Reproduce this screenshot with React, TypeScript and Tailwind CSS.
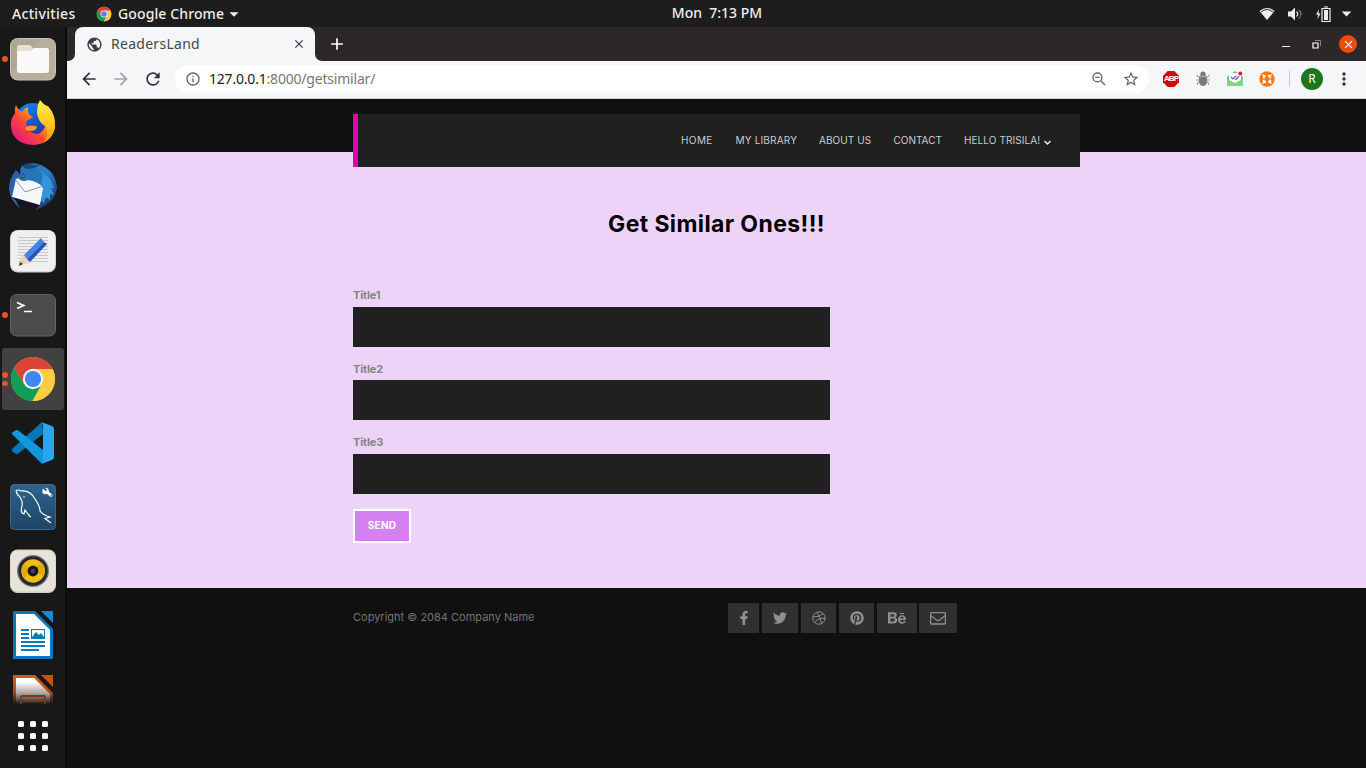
import React from "react";
import {
  MdAdd, MdArrowBack, MdArrowForward, MdClose, MdInfoOutline,
  MdMoreVert, MdPublic, MdRefresh, MdStarBorder, MdArrowDropDown,
} from "react-icons/md";
import { FaBehance, FaFacebookF, FaPinterest, FaTwitter } from "react-icons/fa";

const ChromeLogo = ({ className }: { className: string }) => (
  <svg viewBox="0 0 48 48" className={className}>
    <circle cx="24" cy="24" r="22" fill="#ffcd40" />
    <path d="M24 24 L4.9 13 A22 22 0 0 1 43.6 14 L24 14Z" fill="#db4437" />
    <path d="M4.9 13 A22 22 0 0 0 23.5 46 L32.7 29.5 L24 24 L15.3 29Z" fill="#0f9d58" />
    <path d="M4.9 13 L15.3 29 L24 14 L24 6Z" fill="#db4437" />
    <path d="M4.9 13 L15.3 31 L12 34 L3 20Z" fill="#0f9d58" />
    <path d="M24 14H43.6A22 22 0 0 1 23.5 46L32.7 29Z" fill="#ffcd40" />
    <circle cx="24" cy="24" r="10.2" fill="#f4f4f4" />
    <circle cx="24" cy="24" r="8.1" fill="#4285f4" />
  </svg>
);

const Files = () => (
  <svg viewBox="0 0 48 48" className="size-12">
    <rect x="1" y="3" width="46" height="42.5" rx="8" fill="#c9c3b3" />
    <rect x="2" y="4" width="44" height="40.5" rx="7" fill="#aea793" />
    <path d="M2 37 33 4H39Q46 4 46 11V37Q46 44 39 44H9Q2 44 2 37Z" fill="#b6af9c" />
    <path d="M8 13Q8 10 10 10H20Q22 10 23 12L24 14H38V24H8Z" fill="#e5dfd4" />
    <path d="M8 16H20Q22 16 24 14L25 13H37Q40 13 40 15V35Q40 38 37 38H11Q8 38 8 35Z" fill="#faf9f7" />
  </svg>
);

const Firefox = () => (
  <svg viewBox="0 0 48 48" className="size-12">
    <defs>
      <linearGradient id="ffa" x1="0.9" y1="0.1" x2="0.1" y2="0.9">
        <stop offset="0" stopColor="#ffdc2d" /><stop offset=".35" stopColor="#ff9a18" />
        <stop offset=".6" stopColor="#ff4638" /><stop offset="1" stopColor="#e01784" />
      </linearGradient>
      <linearGradient id="ffb" x1="0" y1="0" x2="0.6" y2="1">
        <stop offset="0" stopColor="#0b8df5" /><stop offset="1" stopColor="#2731a5" />
      </linearGradient>
      <linearGradient id="ffc" x1="0" y1="0" x2="0" y2="1">
        <stop offset="0" stopColor="#fff14a" /><stop offset=".5" stopColor="#ffcc24" /><stop offset="1" stopColor="#ff8b16" />
      </linearGradient>
    </defs>
    <circle cx="24" cy="22" r="18" fill="url(#ffb)" />
    <path d="M7 6Q5 10 6 14Q1 20 2 29Q5 45 24 46Q43 45 46 28Q46 14 33 5Q37 14 37 23Q36 33 28 35Q20 34 19 29Q26 31 28 27Q22 26 18 27Q15 22 21 20L24 18Q18 16 19 8Q15 9 13 13Q9 11 7 6Z" fill="url(#ffa)" />
    <path d="M31 1Q36 7 39 7Q47 16 46 28Q44 39 34 44Q41 36 37 28Q29 23 28 14Q28 6 31 1Z" fill="url(#ffc)" />
    <path d="M17 28Q23 26 28 28Q27 32 22 32Q18 32 16 30Z" fill="#ff9726" />
  </svg>
);

const Thunderbird = () => (
  <svg viewBox="0 0 48 48" className="size-12">
    <defs>
      <linearGradient id="tb" x1="0" y1="0" x2="0.8" y2="1">
        <stop offset="0" stopColor="#2678be" /><stop offset=".5" stopColor="#2d80ca" /><stop offset="1" stopColor="#1c2c68" />
      </linearGradient>
    </defs>
    <path d="M13 3Q22 -2 32 2Q46 8 48 24Q47 40 26 47Q32 42 35 36L9 29Q5 22 12 13Q10 6 13 3Z" fill="url(#tb)" />
    <path d="M7 7Q0 16 0 26Q1 38 12 46Q5 38 7 31Q5 22 11 13L9 9Z" fill="#2863aa" />
    <path d="M7 16 13 14 24 17 35 22 31 42 3 34Z" fill="#f6f7f9" />
    <path d="M6 16 16 29 34 23" fill="none" stroke="#8b98a8" strokeWidth="1" />
    <path d="M10 14Q11 6 18 2Q30 2 33 14Q35 21 33 23Q27 18 19 17Q15 19 11 17Q9 16 10 14Z" fill="#2773b9" />
    <path d="M34 10Q42 14 45 25L42 25 45 32 41 31 41 37 37 34 35 40 32 38 34 26 32 21Z" fill="#3394d8" />
    <path d="M13 3Q17 -1 21 1Q27 3 31 2Q25 6 17 6Z" fill="#174979" />
    <path d="M12 12 15 10 16 15 12 16Z" fill="#3d4b50" />
    <circle cx="14" cy="13" r=".8" fill="#c8a17a" />
    <path d="M3 34 30 43 26 45Q15 44 5 36Z" fill="#191225" />
  </svg>
);

const Editor = () => (
  <svg viewBox="0 0 48 48" className="size-12">
    <rect x="1" y="3" width="46" height="42.5" rx="8" fill="#d6d6d6" />
    <rect x="2" y="3.5" width="44" height="40.5" rx="7" fill="#efefef" />
    <path d="M9 10.5H39M9 13.5H39M9 16.5H39M9 19.5H39M9 22.5H39M9 25.5H39M9 28.5H39M9 31.5H39M9 34.5H39" stroke="#c8c8c8" strokeWidth="1" />
    <path d="M10 39 12 31 17.5 36Z" fill="#eacda9" />
    <path d="M10 39 11 35 14 37Z" fill="#333" />
    <path d="m12 31 3-3 7 7-4 2Z" fill="#f5d1b3" />
    <path d="M15 28 32 11 35 15 18 32Z" fill="#4682e6" />
    <path d="m18 32 17-17 3 2L21 35Z" fill="#2555bd" />
  </svg>
);

const Terminal = () => (
  <svg viewBox="0 0 48 48" className="size-12">
    <rect x="1.5" y="3.5" width="45" height="41.5" rx="6" fill="#4b4b4b" stroke="#656565" />
    <path d="m8 11.5 6.5 3-6.5 3" fill="none" stroke="#fff" strokeWidth="1.9" />
    <path d="M15 20.5H23" stroke="#fff" strokeWidth="1.5" />
  </svg>
);

const VSCode = () => (
  <svg viewBox="0 0 48 48" className="size-12">
    <path d="M33 3 3 30Q2 32 4 33L7 35Q9 35 10 34L34 15Z" fill="#0877b9" />
    <path d="M3 15Q2 14 4 13L7 11Q9 11 10 12L34 31V45L31 43Z" fill="#0f98dc" />
    <path d="M32 3 43 7Q45 8 45 10V38Q45 40 43 41L32 45Q34 44 34 41V7Q34 4 32 3Z" fill="#28a7f0" />
  </svg>
);

const Workbench = () => (
  <svg viewBox="0 0 48 48" className="size-12">
    <defs><linearGradient id="wb" x1="0" y1="0" x2="0" y2="1"><stop stopColor="#2f638f" /><stop offset="1" stopColor="#1d4567" /></linearGradient></defs>
    <rect x="1.5" y="1.5" width="45" height="45" rx="4" fill="url(#wb)" stroke="#47749a" strokeWidth=".8" />
    <path d="M7 8Q8 6 12 8Q21 7 26 16Q31 23 31 28Q34 32 41 34L36 35.5L42 40M7 8Q8 12 11 14Q14 19 13 23Q11 30 15 31L16 27L19 31Q20 33 22 34" fill="none" stroke="#fff" strokeWidth="1.2" />
    <circle cx="15" cy="14" r=".8" fill="#fff" />
    <path d="M37 8 42 12.5" stroke="#fff" strokeWidth="3" strokeLinecap="round" />
    <circle cx="36.5" cy="8" r="3.2" fill="#fff" /><path d="M33 3.5 37.5 7.5" stroke="#2d608b" strokeWidth="2" />
    <circle cx="42.3" cy="12.8" r=".8" fill="#2e5b80" />
  </svg>
);

const Speaker = () => (
  <svg viewBox="0 0 48 48" className="size-12">
    <rect x="1" y="2.5" width="46" height="43.5" rx="7.5" fill="#d1ccc1" />
    <rect x="1.5" y="3.5" width="45" height="41" rx="7" fill="#e7e3d9" />
    <circle cx="24" cy="24" r="16" fill="#76787a" /><circle cx="24" cy="24" r="14.7" fill="#252733" />
    <circle cx="24" cy="24" r="11.8" fill="#f2bd14" />
    <path d="m24 24-9-7q-4 7 0 14ZM24 24l8-9q6 5 3 14Z" fill="#e4a90b" />
    <circle cx="24" cy="24" r="5.4" fill="#17191d" /><circle cx="24" cy="24" r="2.3" fill="#42464a" />
  </svg>
);

const Writer = () => (
  <svg viewBox="0 0 48 48" className="size-12">
    <path d="M5 0H26L44 18V47Q44 48 43 48H5Q4 48 4 47V1Q4 0 5 0Z" fill="#087ac0" />
    <path d="M7 3H25L41 19V45H7Z" fill="#fff" />
    <path d="M32 0H43Q44 0 44 1V12Z" fill="#168bd2" />
    <path d="M12 19H20M12 23H20M12 27H20M12 31H36M12 35H36M12 39H30" stroke="#087bbb" strokeWidth="1.8" />
    <rect x="22.5" y="18.5" width="13" height="9" fill="#fff" stroke="#087bbb" />
    <path d="m23 26 4-5 3 3 2-2 3 4v2H23Z" fill="#087bbb" />
  </svg>
);

const Impress = () => (
  <svg viewBox="0 0 48 29" className="h-[29px] w-12">
    <defs><linearGradient id="pageFade" x1="0" y1="0" x2="0" y2="1"><stop offset=".15" stopColor="#fff" /><stop offset=".6" stopColor="#aaa19d" /><stop offset="1" stopColor="#171717" /></linearGradient>
      <linearGradient id="orangeFade" x1="0" y1="0" x2="0" y2="1"><stop offset=".2" stopColor="#d05b17" /><stop offset=".6" stopColor="#a74914" /><stop offset="1" stopColor="#171717" /></linearGradient></defs>
    <path d="M4 0H26L44 18V29H4Z" fill="url(#orangeFade)" /><path d="M7 3H25L41 19V29H7Z" fill="url(#pageFade)" />
    <path d="M32 0H44V12Z" fill="#c8530f" />
    <path d="M12 29V22Q12 21 13 21H35Q36 21 36 22V29M15 26H33" fill="none" stroke="#7f3814" strokeWidth="1.8" />
  </svg>
);

const dock: { icon: React.ReactNode; dots?: number; active?: boolean }[] = [
  { icon: <Files />, dots: 1 }, { icon: <Firefox /> }, { icon: <Thunderbird /> }, { icon: <Editor /> },
  { icon: <Terminal />, dots: 1 }, { icon: <ChromeLogo className="size-12" />, dots: 2, active: true },
  { icon: <VSCode /> }, { icon: <Workbench /> }, { icon: <Speaker /> }, { icon: <Writer /> },
];

function Dock() {
  return (
    <aside className="flex w-[67px] shrink-0 flex-col border-r-2 border-[#0c0c0c] bg-[#181818]">
      {dock.map((d, i) => (
        <div key={i} className="flex h-16 w-[65px] shrink-0 items-center">
          <div className={d.active ? "relative ml-[2px] flex h-[62px] w-[62px] items-center rounded-[3px] bg-[#414141] pl-[7px]" : "relative ml-[2px] flex h-[62px] w-[62px] items-center pl-[7px]"}>
            <div className="absolute left-0 flex flex-col gap-[3px]">
              {d.dots && <i className="size-[5.5px] rounded-full bg-[#e95420]" />}
              {d.dots === 2 && <i className="size-[5.5px] rounded-full bg-[#e95420]" />}
            </div>
            {d.icon}
          </div>
        </div>
      ))}
      <div className="mt-2 ml-[9px] h-[29px]"><Impress /></div>
      <div className="mt-[17px] ml-[18px] grid w-[30px] grid-cols-3 gap-[6px]">
        {Array.from({ length: 9 }, (_, i) => <i key={i} className="size-[6px] rounded-[1.5px] bg-[#f8f8f8]" />)}
      </div>
    </aside>
  );
}

function SystemBar() {
  return (
    <div className="grid h-[27px] grid-cols-3 items-center bg-[#1d1d1d] text-[14px] font-medium text-[#eee]">
      <div className="flex items-center pl-3">
        <span className="w-[84px] tracking-[0.32px]">Activities</span>
        <ChromeLogo className="size-4" />
        <span className="ml-[6px] tracking-[0.12px] whitespace-nowrap">Google Chrome</span>
        <MdArrowDropDown className="ml-[-1px] size-[22px]" />
      </div>
      <span className="pb-[2px] pl-[68px] text-center whitespace-pre">Mon  7:13 PM</span>
      <div className="flex items-center justify-end pr-[8px]">
        <svg className="h-[14px] w-4" viewBox="0 0 16 14"><path d="M.5 4Q8-2 15.5 4L8 13Z" fill="#eee" /><path d="M2 5Q8 0 14 5" fill="none" stroke="#333" strokeWidth="1" /></svg>
        <svg className="ml-[12px] h-4 w-4" viewBox="0 0 16 16"><path d="M1 5.5H4L8 1.5V14.5L4 10.5H1Z" fill="#eee" /><path d="M9.5 5.5Q12 8 9.5 10.5" stroke="#ddd" strokeWidth="1.3" fill="none" /><path d="M12 4Q16 8 12 12.5" stroke="#777" strokeWidth="1.2" fill="none" /></svg>
        <svg className="ml-[12px] h-4 w-4" viewBox="0 0 16 16"><path d="M4 3.5 1 8.5H3L2.5 13 5.5 7.5H3.5Z" fill="#eee" /><path d="M9 1H13M7 2.5H15V15.5H7Z" fill="none" stroke="#eee" strokeWidth="1.2" /><path d="M9 4H13V14H9Z" fill="#eee" /></svg>
        <MdArrowDropDown className="mt-[-1px] ml-[4px] size-[23px]" />
      </div>
    </div>
  );
}

function TabStrip() {
  return (
    <div className="flex h-[34px] bg-[#2c2829]">
      <div className="flex w-2 items-end bg-[#f4f6f8]"><div className="h-full w-2 rounded-br-[7px] bg-[#2c2829]" /></div>
      <div className="flex w-[240px] items-center rounded-t-[8px] bg-[#f4f6f8] pl-[11px] text-[14px] text-[#45484b]">
        <MdPublic className="size-[17px] text-[#3c4043]" />
        <span className="mb-[2px] ml-2 tracking-[0.28px]">ReadersLand</span>
        <MdClose className="mr-[9px] ml-auto size-[14px] text-[#35383b]" />
      </div>
      <div className="w-2 bg-[#f4f6f8]"><div className="h-full w-2 rounded-bl-[7px] bg-[#2c2829]" /></div>
      <MdAdd className="mt-[7px] ml-[4px] size-5 text-white" />
      <div className="ml-auto flex items-center pr-[9px]">
        <i className="mt-[4px] mr-[22px] h-px w-2 bg-white" />
        <svg className="mr-[18px] size-[9px]" viewBox="0 0 9 9"><path d="M3 .5H8.5V6" stroke="#888" fill="none" /><path d="M1 3H6V8H1Z" stroke="#fff" fill="none" strokeWidth="1.2" /></svg>
        <div className="flex size-[18px] items-center justify-center rounded-full bg-[#ed4b0b]"><MdClose className="size-[13px] text-white" /></div>
      </div>
    </div>
  );
}

const Adblock = () => (
  <div className="relative flex size-4 items-center justify-center">
    <svg className="absolute inset-0 size-4" viewBox="0 0 16 16"><path d="M4.7 0H11.3L16 4.7V11.3L11.3 16H4.7L0 11.3V4.7Z" fill="#c90d12" /></svg>
    <span className="relative font-['Liberation_Sans',sans-serif] text-[8px] leading-[10px] font-bold tracking-[-0.9px] text-white">ABP</span>
  </div>
);
const Bug = () => (
  <svg className="size-4" viewBox="0 0 16 16"><path d="M4 6 2 5V3.5M4 9H1M4 11 2.5 12V14M12 6 14 5V3.5M12 9H15M12 11 13.5 12V14" fill="none" stroke="#9b9b9b" strokeWidth="1.1" /><circle cx="8" cy="3.2" r="2.6" fill="#777" /><path d="M4 7Q4 4 8 4T12 7V11Q11 15 8 15T4 11Z" fill="#797979" /><path d="M5 6Q8 4 11 6" stroke="#bbb" fill="none" /></svg>
);
const Mail = () => (
  <svg className="size-4" viewBox="0 0 16 16"><path d="M0 6 8 0 16 6V15H0Z" fill="#58c977" /><path d="M2 2H14V9L8 13 2 9Z" fill="#fff" /><path d="M0 8 8 12 16 8V14Q16 15 15 15H1Q0 15 0 14Z" fill="#79d989" /><path d="m4 6 2 2 3-3M8 8l1 .5L12 5" fill="none" stroke="#7b50c8" strokeWidth="1.2" /><circle cx="13.3" cy="2.5" r="1.9" fill="#f00b2c" /></svg>
);
const Orange = () => (
  <svg className="size-4" viewBox="0 0 16 16"><circle cx="8" cy="8" r="7.7" fill="#fb780b" /><path d="M3.5 7Q4 4.500 6 3.500L7 5 5.500 7.500ZM9 3.500Q12 4 12.500 7L11 7.500 9 5.500ZM12.500 9Q12 12 10 12.500L9 11 10.500 8.500ZM7 12.500Q4 12 3.500 9L5 8.500 7 10.500Z" fill="#fff" /><path d="m3.500 3.500 2 2M12.500 3.500l-2 2M3.500 12.500l2-2M12.500 12.500l-2-2" stroke="#fff" strokeWidth="1.3" /></svg>
);

function Toolbar() {
  return (
    <div className="flex h-[38px] items-center border-b border-[#cbd3d9] bg-[#f4f6f8] pb-px">
      <MdArrowBack className="ml-[12px] size-5 text-[#303336]" />
      <MdArrowForward className="ml-3 size-5 text-[#a0a2a5]" />
      <MdRefresh className="ml-3 size-5 text-[#303336]" />
      <div className="ml-[12px] flex h-7 w-[974px] items-center rounded-full bg-white pl-[10px]">
        <MdInfoOutline className="size-4 text-[#5f6368]" />
        <span className="mb-[2px] ml-[8px] text-[14px] tracking-[-0.2px] text-[#777]"><span className="text-[#202124]">127.0.0.1</span>:8000/getsimilar/</span>
        <svg className="ml-auto size-[14px]" viewBox="0 0 14 14"><circle cx="5.4" cy="5.4" r="4.4" fill="none" stroke="#666a6e" strokeWidth="1.4" /><path d="M3.2 5.4H7.6M8.8 8.8 13 13" stroke="#666a6e" strokeWidth="1.4" /></svg>
        <MdStarBorder className="mr-[9px] ml-[16px] size-[18px] text-[#5f6368]" />
      </div>
      <div className="ml-[14px] flex items-center gap-4"><Adblock /><Bug /><Mail /><Orange /></div>
      <i className="ml-[14px] h-4 w-px bg-[#c6cbd0]" />
      <div className="ml-[11px] flex size-[22px] items-center justify-center rounded-full bg-[#1e761e] text-[12px] text-white">R</div>
      <MdMoreVert className="ml-[11px] size-5 text-[#34373a]" />
    </div>
  );
}

function Nav() {
  return (
    <nav className="relative z-10 ml-[286px] flex h-[53px] w-[727px] items-center border-l-[5px] border-[#e000b5] bg-[#202020] pb-px pl-[323px] text-[10px] whitespace-nowrap text-[#ccc]">
      <a className="w-[54.5px] tracking-[0.4px]">HOME</a>
      <a className="w-[83.5px] tracking-[0.18px]">MY LIBRARY</a>
      <a className="w-[74.5px] tracking-[0.08px]">ABOUT US</a>
      <a className="w-[70.5px]">CONTACT</a>
      <a className="w-[80px] tracking-[0.08px]">HELLO TRISILA!</a>
      <svg className="mt-[4px] size-[7px]" viewBox="0 0 7 7"><path d="m.5 2 3 3 3-3" fill="none" stroke="#eee" strokeWidth="1.5" /></svg>
    </nav>
  );
}

const Dribbble = () => (
  <svg viewBox="0 0 14 14" className="size-[14px]" fill="none" stroke="currentColor" strokeWidth="1"><circle cx="7" cy="7" r="6.2" /><path d="M4.7 1.3Q8 5 9.7 12.5M.8 6Q7.5 6.2 11.3 2.6M3 11.6Q6 6.3 13.2 7.5" /></svg>
);
const Envelope = () => (
  <svg viewBox="0 0 16 14" className="h-[14px] w-4" fill="none" stroke="currentColor" strokeWidth="1.3"><rect x=".6" y="1.6" width="14.8" height="11.4" rx="1" /><path d="M.8 4.5 6.4 9Q8 10 9.6 9L15.2 4.5" /></svg>
);

function Footer() {
  const tile = "flex h-[30px] items-center justify-center bg-[#303030]";
  return (
    <footer className="flex flex-1 items-start bg-[#101010] pt-[15px] pl-[286px] text-[11px] text-[#747474]">
      <span className="mt-[6px] w-[375px]">Copyright © 2084 Company Name</span>
      <div className="flex gap-[3px] text-[#909090]">
        <div className={`${tile} w-[31px]`}><FaFacebookF className="mb-px size-[14px]" /></div>
        <div className={`${tile} w-[36px]`}><FaTwitter className="size-[14px]" /></div>
        <div className={`${tile} w-[35px]`}><Dribbble /></div>
        <div className={`${tile} w-[35px]`}><FaPinterest className="mb-px size-[14px]" /></div>
        <div className={`${tile} w-[40px]`}><FaBehance className="size-[18px]" /></div>
        <div className={`${tile} ml-[-1px] w-[38px]`}><Envelope /></div>
      </div>
    </footer>
  );
}

export default function App() {
  return (
    <div className="flex h-screen w-screen flex-col overflow-hidden bg-[#101010] font-['Noto_Sans',sans-serif]">
      <SystemBar />
      <div className="flex min-h-0 flex-1">
        <Dock />
        <div className="flex min-w-0 flex-1 flex-col">
          <TabStrip />
          <Toolbar />
          <div className="flex flex-1 flex-col font-['Inter',sans-serif]">
            <header className="h-[53px] bg-[#101010] pt-[15px]"><Nav /></header>
            <main className="h-[436px] bg-[#eed3f8] pl-[286px]">
              <h1 className="w-[727px] pt-[56px] text-center text-[23px] leading-8 font-bold tracking-[0.38px] text-black">Get Similar Ones!!!</h1>
              <form className="mt-[48px] w-[477px] text-[11px] font-bold text-[#848484]">
                <label className="block h-[19px] leading-[15px] tracking-[-0.15px]">Title1<input className="mt-[4px] block h-10 w-full bg-[#202020]" /></label>
                <label className="mt-[55px] block h-[18px] leading-[15px] tracking-[-0.15px]">Title2<input className="mt-[3px] block h-10 w-full bg-[#202020]" /></label>
                <label className="mt-[55px] block h-[19px] leading-[15px] tracking-[-0.15px]">Title3<input className="mt-[4px] block h-10 w-full bg-[#202020]" /></label>
                <button type="button" className="mt-[55px] block h-[34px] w-[58px] border-2 border-white bg-[#d580f1] pb-px text-[10px] font-bold tracking-[0.25px] text-white">SEND</button>
              </form>
            </main>
            <Footer />
          </div>
        </div>
      </div>
    </div>
  );
}
